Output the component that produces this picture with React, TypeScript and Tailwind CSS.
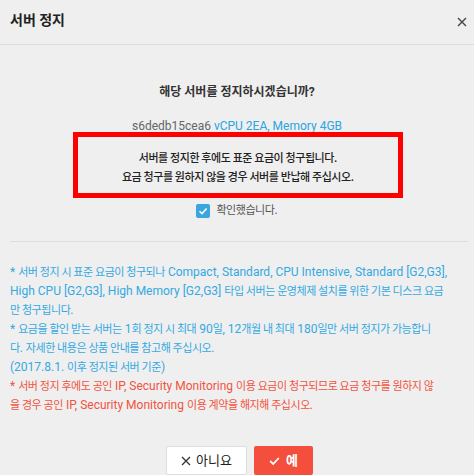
import React from "react";

const KO = /([\uac00-\ud7a3](?:[\uac00-\ud7a3 ]*[\uac00-\ud7a3])?)/;

function K({ t }: { t: string }) {
  const parts = t.split(KO);
  return (
    <>
      {parts.map((p, i) =>
        i % 2 === 1 ? (
          <span key={i} className="text-[11px] tracking-[-0.45px]">
            {p}
          </span>
        ) : (
          <React.Fragment key={i}>{p}</React.Fragment>
        )
      )}
    </>
  );
}

export default function App() {
  const font = { fontFamily: 'Roboto, "Noto Sans CJK KR", "Noto Sans", sans-serif' };
  return (
    <div className="w-[474px] h-[475px] bg-[#efefef] overflow-hidden text-[#333]" style={font}>
      <div className="h-[45px] border-b border-[#dcdcdc] flex justify-between pl-[10px] pr-[7px]">
        <div className="pt-[11px] text-[14px] leading-[18px] font-bold text-[#222]">서버 정지</div>
        <div className="pt-[17px]">
          <svg width="10" height="10" viewBox="0 0 10 10">
            <path d="M1 1L9 9M9 1L1 9" stroke="#444" strokeWidth="1.4" />
          </svg>
        </div>
      </div>
      <div className="flex flex-col items-center">
        <div className="mt-[38px] text-[12px] leading-[18px] font-bold text-[#333]">해당 서버를 정지하시겠습니까?</div>
        <div className="mt-[17px] text-[12px] leading-[16px] text-[#666]">
          s6dedb15cea6 <span className="text-[#2ba4e0]">vCPU 2EA, Memory 4GB</span>
        </div>
        <div className="w-[330px] ml-[2px] mt-[-2px] border-[5px] border-[#ff0000] pt-[12px] pb-[6px] flex flex-col items-center text-[12px] leading-[19px] font-medium text-[#222]">
          <div>
            <K t="서버를 정지한 후에도 표준 요금이 청구됩니다." />
          </div>
          <div>
            <K t="요금 청구를 원하지 않을 경우 서버를 반납해 주십시오." />
          </div>
        </div>
        <div className="mt-[5px] flex items-center gap-[6px] text-[12px] leading-[14px] text-[#555]">
          <div className="w-[14px] h-[14px] rounded-[2px] bg-[#3aa6e0] flex items-center justify-center">
            <svg width="10" height="10" viewBox="0 0 10 10">
              <path d="M1.5 5.2L4 7.6L8.6 2.6" stroke="#fff" strokeWidth="1.5" fill="none" />
            </svg>
          </div>
          <span>
            <K t="확인했습니다." />
          </span>
        </div>
      </div>
      <div className="mt-[23px] ml-[10px] mr-[6px] h-px bg-[#dcdcdc]" />
      <div className="mt-[21px] px-[10px] text-[12px] leading-[18px] whitespace-nowrap">
        <div className="text-[#33a9e2]">
          <K t="* 서버 정지 시 표준 요금이 청구되나 Compact, Standard, CPU Intensive, Standard [G2,G3]," />
          <br />
          <K t="High CPU [G2,G3], High Memory [G2,G3] 타입 서버는 운영체제 설치를 위한 기본 디스크 요금" />
          <br />
          <K t="만 청구됩니다." />
          <br />
          <K t="* 요금을 할인 받는 서버는 1회 정지 시 최대 90일, 12개월 내 최대 180일만 서버 정지가 가능합니" />
          <br />
          <K t="다. 자세한 내용은 상품 안내를 참고해 주십시오." />
          <br />
          <K t="(2017.8.1. 이후 정지된 서버 기준)" />
        </div>
        <div className="text-[#f2533f]">
          <K t="* 서버 정지 후에도 공인 IP, Security Monitoring 이용 요금이 청구되므로 요금 청구를 원하지 않" />
          <br />
          <K t="을 경우 공인 IP, Security Monitoring 이용 계약을 해지해 주십시오." />
        </div>
      </div>
      <div className="mt-[31px] flex justify-center gap-[7px] pl-[5px]">
        <button className="w-[81px] h-[29px] bg-white border border-[#ddd] rounded-[2px] flex items-center justify-center gap-[5px] text-[13px] text-[#222]">
          <svg width="10" height="10" viewBox="0 0 10 10">
            <path d="M1 1L9 9M9 1L1 9" stroke="#333" strokeWidth="1.3" />
          </svg>
          <span>아니요</span>
        </button>
        <button className="w-[59px] h-[29px] bg-[#f44e3c] rounded-[2px] flex items-center justify-center gap-[6px] text-[13px] font-bold text-white">
          <svg width="11" height="10" viewBox="0 0 11 10">
            <path d="M1.2 5L4.2 8L9.8 2" stroke="#fff" strokeWidth="1.8" fill="none" />
          </svg>
          <span>예</span>
        </button>
      </div>
    </div>
  );
}
